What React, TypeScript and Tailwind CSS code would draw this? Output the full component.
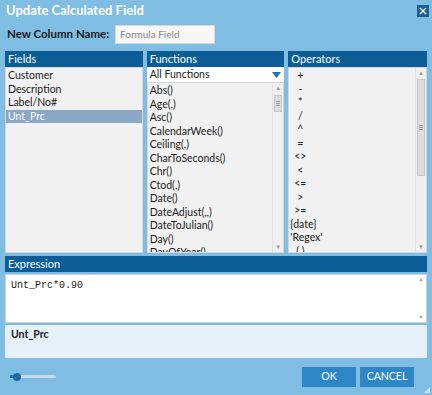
const fields = ["Customer", "Description", "Label/No#"];
const functions = [
  "Abs()",
  "Age(,)",
  "Asc()",
  "CalendarWeek()",
  "Ceiling(,)",
  "CharToSeconds()",
  "Chr()",
  "Ctod(,)",
  "Date()",
  "DateAdjust(,,)",
  "DateToJulian()",
  "Day()",
  "DayOfYear()",
];
const operators: [string, boolean][] = [
  ["+", true],
  ["-", true],
  ["*", true],
  ["/", true],
  ["^", true],
  ["=", true],
  ["<>", true],
  ["<", true],
  ["<=", true],
  [">", true],
  [">=", true],
  ["{date}", false],
  ["'Regex'", false],
  ["( )", true],
];

function Header({ title }: { title: string }) {
  return (
    <div className="h-[16px] bg-[#0c5d95] text-white text-[11px] leading-[16px] pl-[3px] shrink-0">
      {title}
    </div>
  );
}

function VScroll({ thumbTop, thumbH }: { thumbTop: number; thumbH: number }) {
  return (
    <div className="w-[11px] bg-[#efefef] border-l border-[#e2e2e2] flex flex-col items-center relative">
      <span className="text-[6px] leading-[10px] text-[#999]">▲</span>
      <div
        className="absolute left-[1px] w-[8px] bg-[#dcdcdc] border border-[#c6c6c6] flex items-center justify-center"
        style={{ top: thumbTop, height: thumbH }}
      >
        <div className="flex flex-col gap-[1px]">
          <div className="w-[4px] h-px bg-[#999]" />
          <div className="w-[4px] h-px bg-[#999]" />
          <div className="w-[4px] h-px bg-[#999]" />
        </div>
      </div>
      <span className="mt-auto text-[6px] leading-[10px] text-[#999]">▼</span>
    </div>
  );
}

export default function App() {
  return (
    <div
      className="w-[432px] h-[395px] bg-[#7fbde3] relative flex flex-col overflow-hidden text-[#1b1b1b]"
      style={{ fontFamily: "Lato, 'Noto Sans', sans-serif" }}
    >
      <div className="h-[21px] flex items-center justify-between pl-[6px] pr-[3px]">
        <span className="text-white font-bold text-[13px] whitespace-nowrap">Update Calculated Field</span>
        <div className="w-[12px] h-[12px] bg-[#1d5f95] flex items-center justify-center">
          <svg width="8" height="8" viewBox="0 0 8 8">
            <path d="M1 1L7 7M7 1L1 7" stroke="white" strokeWidth="1.3" />
          </svg>
        </div>
      </div>

      <div className="h-[22px] mt-[2px] flex items-center pl-[7px]">
        <span className="font-bold text-[11.5px] w-[108px] whitespace-nowrap">New Column Name:</span>
        <div className="w-[100px] h-[19px] bg-[#f7f7f7] border border-[#d8d8d8] flex items-center pl-[4px] text-[10px] text-[#8a8a8a]">
          Formula Field
        </div>
      </div>

      <div className="mt-[6px] mx-[5px] h-[202px] flex gap-[4px]">
        <div className="w-[138px] flex flex-col">
          <Header title="Fields" />
          <div className="flex-1 bg-[#f1f1f1] border border-[#d6d6d6] pt-[1px] text-[10.5px]">
            {fields.map((f) => (
              <div key={f} className="h-[13.5px] leading-[13.5px] pl-[2px]">
                {f}
              </div>
            ))}
            <div className="h-[13px] leading-[13px] pl-[2px] bg-[#8aa8c6] text-white">Unt_Prc</div>
          </div>
        </div>

        <div className="w-[138px] flex flex-col">
          <Header title="Functions" />
          <div className="h-[15px] bg-white flex items-center justify-between pl-[3px] pr-[3px] text-[10.5px]">
            <span>All Functions</span>
            <svg width="9" height="6" viewBox="0 0 9 6">
              <path d="M0 0H9L4.5 6Z" fill="#1f74b5" />
            </svg>
          </div>
          <div className="flex-1 bg-[#f1f1f1] border border-[#d6d6d6] flex overflow-hidden">
            <div className="flex-1 pt-[1px] text-[10.5px]">
              {functions.map((f) => (
                <div key={f} className="h-[13.5px] leading-[13.5px] pl-[2px] whitespace-nowrap">
                  {f}
                </div>
              ))}
            </div>
            <VScroll thumbTop={12} thumbH={17} />
          </div>
        </div>

        <div className="w-[139px] flex flex-col">
          <Header title="Operators" />
          <div className="flex-1 bg-[#f1f1f1] border border-[#d6d6d6] flex overflow-hidden">
            <div className="flex-1 pt-[1px] text-[10.5px]">
              {operators.map(([o, c]) => (
                <div key={o} className={`h-[13.5px] leading-[13.5px] whitespace-nowrap ${c ? "w-[22px] text-center" : "pl-[1px]"}`}>
                  {o}
                </div>
              ))}
            </div>
            <VScroll thumbTop={11} thumbH={97} />
          </div>
        </div>
      </div>

      <div className="mt-[3px] mx-[5px] flex flex-col">
        <Header title="Expression" />
        <div className="mt-[2px] h-[49px] bg-white border border-[#cfcfcf] flex">
          <div className="flex-1 pl-[5px] pt-[3px] text-[10px]" style={{ fontFamily: "'Liberation Mono', monospace" }}>
            Unt_Prc*0.90
          </div>
          <div className="w-[10px] flex flex-col items-center text-[5px] text-[#999] py-[1px] justify-between">
            <span>▲</span>
            <span>▼</span>
          </div>
        </div>
        <div className="mt-[2px] h-[33px] bg-[#e6f0f8] pl-[6px] pt-[2px] font-bold text-[10.5px]">Unt_Prc</div>
      </div>

      <div className="flex-1 flex items-center pl-[10px] pr-[18px]">
        <div className="relative w-[46px] h-[3px] bg-[#c9d8e6] rounded-full">
          <div className="absolute left-0 top-0 w-[6px] h-[3px] bg-[#2d6fa8]" />
          <div className="absolute left-[3px] top-[-2.5px] w-[8px] h-[8px] rounded-full bg-[#2668a3]" />
        </div>
        <div className="ml-auto flex gap-[4px]">
          <button className="w-[54px] h-[20px] bg-[#2d87c7] text-white text-[10.5px]">OK</button>
          <button className="w-[54px] h-[20px] bg-[#2d87c7] text-white text-[10.5px]">CANCEL</button>
        </div>
      </div>
      <svg className="absolute right-[1px] bottom-[1px]" width="8" height="8" viewBox="0 0 8 8">
        <path d="M7 1V7H1Z" fill="#d5e6f2" />
      </svg>
    </div>
  );
}
